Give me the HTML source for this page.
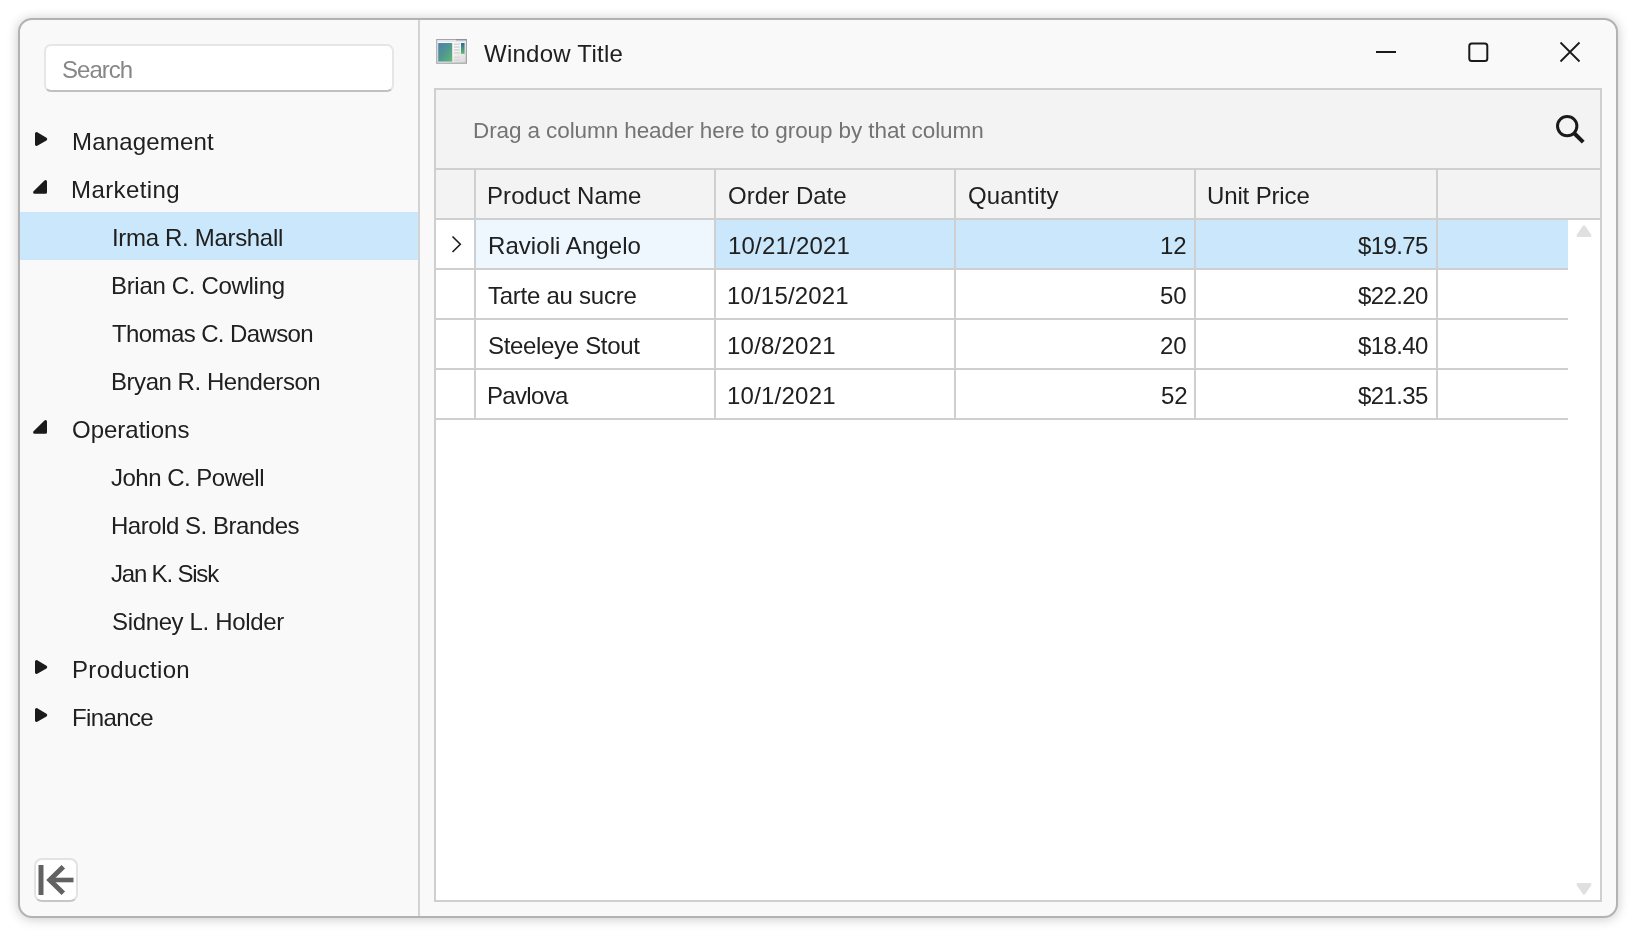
<!DOCTYPE html>
<html><head><meta charset="utf-8"><style>
*{box-sizing:border-box;margin:0;padding:0}
html,body{width:1636px;height:936px;background:#ffffff;overflow:hidden;font-family:"Liberation Sans",sans-serif;color:#202020}
.a{position:absolute}
.t{position:absolute;white-space:nowrap;font-size:24px;line-height:24px;will-change:transform}
.win{left:18px;top:18px;width:1600px;height:900px;border:2px solid #b2b2b2;border-radius:14px;background:#f9f9f9;box-shadow:0 1px 12px rgba(0,0,0,0.22)}
.ln{position:absolute;background:#cfcfcf}
</style></head><body>
<div class="a win"></div>
<div class="ln" style="left:418px;top:20px;width:2px;height:896px;background:#d3d3d3"></div>
<div class="a" style="left:44px;top:44px;width:350px;height:48px;background:#fff;border:2px solid #e6e6e6;border-bottom-color:#c0c0c0;border-radius:7px"></div>
<svg class="a" style="left:30px;top:128px" width="22" height="24"><polygon points="6.5,5.5 15.7,11.1 6.5,16.5" fill="#1b1b1b" stroke="#1b1b1b" stroke-width="3" stroke-linejoin="round"/></svg>
<svg class="a" style="left:30px;top:176px" width="22" height="24"><polygon points="15.5,5.5 15.5,16.2 4.6,16.2" fill="#1b1b1b" stroke="#1b1b1b" stroke-width="3" stroke-linejoin="round"/></svg>
<div class="a" style="left:20px;top:212px;width:398px;height:48px;background:#cbe7fc"></div>
<svg class="a" style="left:30px;top:416px" width="22" height="24"><polygon points="15.5,5.5 15.5,16.2 4.6,16.2" fill="#1b1b1b" stroke="#1b1b1b" stroke-width="3" stroke-linejoin="round"/></svg>
<svg class="a" style="left:30px;top:656px" width="22" height="24"><polygon points="6.5,5.5 15.7,11.1 6.5,16.5" fill="#1b1b1b" stroke="#1b1b1b" stroke-width="3" stroke-linejoin="round"/></svg>
<svg class="a" style="left:30px;top:704px" width="22" height="24"><polygon points="6.5,5.5 15.7,11.1 6.5,16.5" fill="#1b1b1b" stroke="#1b1b1b" stroke-width="3" stroke-linejoin="round"/></svg>
<div class="a" style="left:34px;top:858px;width:44px;height:44px;background:#fff;border:2px solid #e3e3e3;border-bottom-color:#c6c6c6;border-radius:8px"></div>
<svg class="a" style="left:34px;top:858px" width="44" height="44"><rect x="4.5" y="7" width="5" height="30" fill="#626262"/><path d="M29.3 8.8 L15.8 22 L29.3 35.2" fill="none" stroke="#626262" stroke-width="5"/><rect x="15" y="19.7" width="24.5" height="4.6" fill="#626262"/></svg>
<svg class="a" style="left:436px;top:39px" width="32" height="26">
<defs><linearGradient id="g1" x1="0" y1="0" x2="1" y2="1"><stop offset="0" stop-color="#4f7fae"/><stop offset="0.5" stop-color="#4f9890"/><stop offset="1" stop-color="#62b872"/></linearGradient>
<linearGradient id="g2" x1="0" y1="0" x2="0" y2="1"><stop offset="0" stop-color="#2f6a9e"/><stop offset="1" stop-color="#5fb86c"/></linearGradient>
<linearGradient id="g3" x1="0" y1="0" x2="1" y2="1"><stop offset="0" stop-color="#ffffff"/><stop offset="0.6" stop-color="#f2f2f2"/><stop offset="1" stop-color="#d6d6d6"/></linearGradient></defs>
<rect x="0.8" y="0.6" width="29.6" height="23.6" fill="url(#g3)" stroke="#a3a5a9" stroke-width="1.2"/>
<rect x="1.5" y="1.3" width="28.2" height="1.6" fill="#e1e6ec"/>
<rect x="20" y="0.2" width="10.6" height="1.2" fill="#8e8e8e"/>
<rect x="2.2" y="4" width="14" height="18.6" fill="url(#g1)"/>
<rect x="18" y="4.4" width="5.7" height="1.5" fill="#d4d4d4"/><rect x="18" y="7.3" width="5.7" height="1.5" fill="#d4d4d4"/><rect x="18" y="10.2" width="5.7" height="1.5" fill="#d4d4d4"/><rect x="18" y="13.2" width="5.7" height="1.5" fill="#d4d4d4"/><rect x="18" y="17.7" width="5.7" height="1" fill="#d0d0d0"/><rect x="18" y="20.3" width="5.7" height="1.5" fill="#d4d4d4"/>
<rect x="25" y="4" width="3.6" height="10.8" fill="url(#g2)"/>
</svg>
<svg class="a" style="left:1370px;top:36px" width="220" height="32"><line x1="6" y1="16" x2="26" y2="16" stroke="#1a1a1a" stroke-width="2"/><rect x="99.3" y="7.5" width="18" height="17.5" rx="2.5" fill="none" stroke="#1a1a1a" stroke-width="2"/><path d="M190.5 6.5 L209.5 25.5 M209.5 6.5 L190.5 25.5" stroke="#1a1a1a" stroke-width="1.8"/></svg>
<div class="a" style="left:434px;top:88px;width:1168px;height:814px;border:2px solid #cfcfcf;background:#fff"></div>
<div class="a" style="left:436px;top:90px;width:1164px;height:128px;background:#f3f3f3"></div>
<div class="ln" style="left:436px;top:168px;width:1164px;height:2px"></div>
<div class="ln" style="left:436px;top:218px;width:1164px;height:2px"></div>
<svg class="a" style="left:1550px;top:108px" width="40" height="40"><circle cx="17.2" cy="18.1" r="9.7" fill="none" stroke="#1a1a1a" stroke-width="3"/><line x1="24" y1="25" x2="33.2" y2="34.2" stroke="#1a1a1a" stroke-width="4"/></svg>
<div class="a" style="left:716px;top:220px;width:852px;height:48px;background:#cbe7fc"></div>
<div class="a" style="left:476px;top:220px;width:238px;height:48px;background:#eff7fe"></div>
<div class="ln" style="left:436px;top:268px;width:1132px;height:2px"></div>
<div class="ln" style="left:436px;top:318px;width:1132px;height:2px"></div>
<div class="ln" style="left:436px;top:368px;width:1132px;height:2px"></div>
<div class="ln" style="left:436px;top:418px;width:1132px;height:2px"></div>
<div class="ln" style="left:474px;top:170px;width:2px;height:48px"></div>
<div class="ln" style="left:474px;top:220px;width:2px;height:198px"></div>
<div class="ln" style="left:714px;top:170px;width:2px;height:48px"></div>
<div class="ln" style="left:714px;top:220px;width:2px;height:198px"></div>
<div class="ln" style="left:954px;top:170px;width:2px;height:48px"></div>
<div class="ln" style="left:954px;top:220px;width:2px;height:198px"></div>
<div class="ln" style="left:1194px;top:170px;width:2px;height:48px"></div>
<div class="ln" style="left:1194px;top:220px;width:2px;height:198px"></div>
<div class="ln" style="left:1436px;top:170px;width:2px;height:48px"></div>
<div class="ln" style="left:1436px;top:220px;width:2px;height:198px"></div>
<svg class="a" style="left:446px;top:234px" width="20" height="24"><path d="M6.5 2.5 L14.3 10.3 L6.5 18" fill="none" stroke="#1b1b1b" stroke-width="1.6"/></svg>
<svg class="a" style="left:1572px;top:222px" width="24" height="18"><polygon points="6,13.5 12,4.8 18,13.5" fill="#e0e0e0" stroke="#e0e0e0" stroke-width="3" stroke-linejoin="round"/></svg>
<svg class="a" style="left:1572px;top:880px" width="24" height="18"><polygon points="6,4.5 18,4.5 12,13.2" fill="#e0e0e0" stroke="#e0e0e0" stroke-width="3" stroke-linejoin="round"/></svg>
<div class="t" id="t0" style="color:#878787;letter-spacing:-0.968px;left:61.80px;top:58.00px;">Search</div>
<div class="t" id="t1" style="letter-spacing:0.173px;left:71.80px;top:130.00px;">Management</div>
<div class="t" id="t2" style="letter-spacing:0.410px;left:71.40px;top:178.00px;">Marketing</div>
<div class="t" id="t3" style="letter-spacing:-0.319px;left:111.80px;top:226.00px;">Irma R. Marshall</div>
<div class="t" id="t4" style="letter-spacing:-0.315px;left:111.40px;top:274.00px;">Brian C. Cowling</div>
<div class="t" id="t5" style="letter-spacing:-0.604px;left:111.80px;top:322.00px;">Thomas C. Dawson</div>
<div class="t" id="t6" style="letter-spacing:-0.458px;left:111.00px;top:370.00px;">Bryan R. Henderson</div>
<div class="t" id="t7" style="letter-spacing:0.000px;left:71.60px;top:418.00px;">Operations</div>
<div class="t" id="t8" style="letter-spacing:-0.505px;left:111.20px;top:466.00px;">John C. Powell</div>
<div class="t" id="t9" style="letter-spacing:-0.469px;left:110.60px;top:514.00px;">Harold S. Brandes</div>
<div class="t" id="t10" style="letter-spacing:-1.190px;left:111.00px;top:562.00px;">Jan K. Sisk</div>
<div class="t" id="t11" style="letter-spacing:-0.352px;left:111.60px;top:610.00px;">Sidney L. Holder</div>
<div class="t" id="t12" style="letter-spacing:0.327px;left:71.80px;top:658.00px;">Production</div>
<div class="t" id="t13" style="letter-spacing:-0.630px;left:71.80px;top:706.00px;">Finance</div>
<div class="t" id="t14" style="letter-spacing:0.253px;left:484.00px;top:42.00px;">Window Title</div>
<div class="t" id="t15" style="font-size:22.5px;line-height:22.5px;color:#737373;letter-spacing:-0.097px;left:472.80px;top:119.85px;">Drag a column header here to group by that column</div>
<div class="t" id="t16" style="letter-spacing:0.091px;left:487.00px;top:184.00px;">Product Name</div>
<div class="t" id="t17" style="letter-spacing:-0.013px;left:727.60px;top:184.00px;">Order Date</div>
<div class="t" id="t18" style="letter-spacing:0.156px;left:968.00px;top:184.00px;">Quantity</div>
<div class="t" id="t19" style="letter-spacing:-0.142px;left:1207.00px;top:184.00px;">Unit Price</div>
<div class="t" id="t20" style="letter-spacing:0.060px;left:487.60px;top:234.00px;">Ravioli Angelo</div>
<div class="t" id="t21" style="letter-spacing:0.204px;left:727.80px;top:234.00px;">10/21/2021</div>
<div class="t" id="t22" style="left:1159.50px;top:234.00px;">12</div>
<div class="t" id="t23" style="letter-spacing:-0.600px;left:1358.00px;top:234.00px;">$19.75</div>
<div class="t" id="t24" style="letter-spacing:-0.252px;left:487.60px;top:284.00px;">Tarte au sucre</div>
<div class="t" id="t25" style="letter-spacing:0.167px;left:727.40px;top:284.00px;">10/15/2021</div>
<div class="t" id="t26" style="left:1159.50px;top:284.00px;">50</div>
<div class="t" id="t27" style="letter-spacing:-0.600px;left:1358.00px;top:284.00px;">$22.20</div>
<div class="t" id="t28" style="letter-spacing:-0.322px;left:487.60px;top:334.00px;">Steeleye Stout</div>
<div class="t" id="t29" style="letter-spacing:0.222px;left:727.40px;top:334.00px;">10/8/2021</div>
<div class="t" id="t30" style="left:1159.50px;top:334.00px;">20</div>
<div class="t" id="t31" style="letter-spacing:-0.600px;left:1358.00px;top:334.00px;">$18.40</div>
<div class="t" id="t32" style="letter-spacing:-0.667px;left:486.60px;top:384.00px;">Pavlova</div>
<div class="t" id="t33" style="letter-spacing:0.222px;left:727.40px;top:384.00px;">10/1/2021</div>
<div class="t" id="t34" style="left:1160.50px;top:384.00px;">52</div>
<div class="t" id="t35" style="letter-spacing:-0.600px;left:1358.00px;top:384.00px;">$21.35</div>
</body></html>
